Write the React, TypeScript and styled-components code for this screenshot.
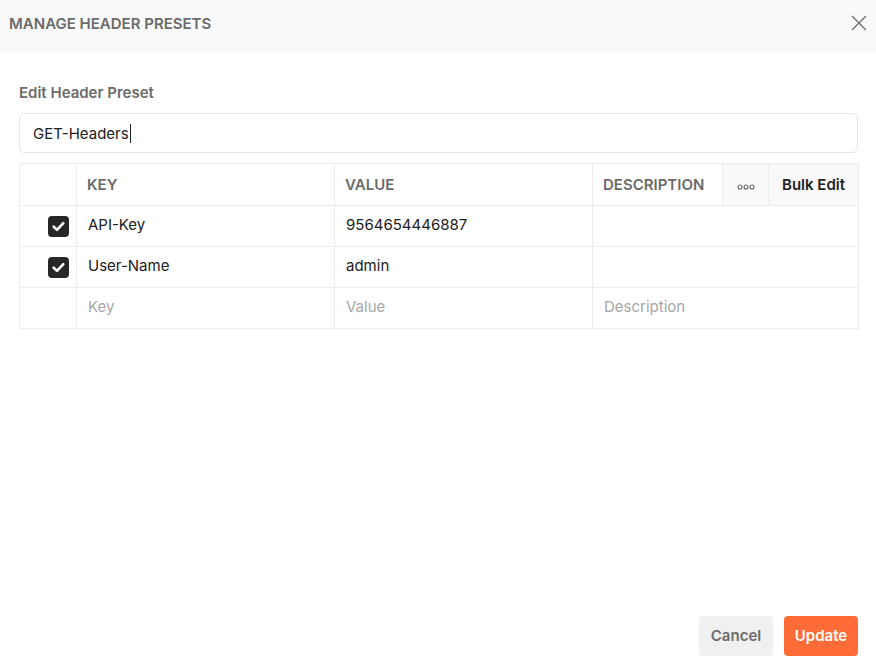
import styled, { createGlobalStyle } from "styled-components";

const GlobalStyle = createGlobalStyle`
  html, body {
    margin: 0;
    padding: 0;
    background: #ffffff;
    font-family: Inter, "Noto Sans", "Liberation Sans", sans-serif;
  }
  * { box-sizing: border-box; }
`;

const Modal = styled.div`
  width: 876px;
  height: 672px;
  display: flex;
  flex-direction: column;
  background: #ffffff;
`;

const Header = styled.div`
  height: 52px;
  flex-shrink: 0;
  display: flex;
  align-items: center;
  justify-content: space-between;
  padding: 0 8px 6px 9px;
  background: #f9f9f9;
`;

const Title = styled.div`
  font-size: 15px;
  font-weight: 600;
  color: #6b6b6b;
`;

const CloseButton = styled.button`
  width: 18px;
  height: 18px;
  padding: 0;
  border: none;
  background: transparent;
  display: flex;
  align-items: center;
  justify-content: center;
  color: #6b6b6b;
  cursor: pointer;
`;

const Body = styled.div`
  flex: 1;
  padding: 31px 18px 0 19px;
`;

const Label = styled.div`
  font-size: 15px;
  font-weight: 600;
  line-height: 20px;
  color: #6b6b6b;
`;

const NameInput = styled.div`
  margin-top: 10px;
  height: 40px;
  border: 1px solid #e6e6e6;
  border-radius: 5px;
  display: flex;
  align-items: center;
  padding-left: 13px;
  font-size: 15px;
  color: #212121;
`;

const Caret = styled.span`
  display: inline-block;
  width: 1px;
  height: 19px;
  background: #212121;
  margin-left: 1px;
`;

const Table = styled.table`
  margin-top: 10px;
  width: 100%;
  border-collapse: collapse;
  table-layout: fixed;
  font-size: 15px;
`;

const HeadCell = styled.th<{ $shaded?: boolean; $dark?: boolean }>`
  height: 42px;
  padding: 0 10px;
  text-align: ${(p) => (p.$dark ? "center" : "left")};
  font-weight: 600;
  color: ${(p) => (p.$dark ? "#212121" : "#6b6b6b")};
  background: ${(p) => (p.$shaded ? "#f9f9f9" : "#ffffff")};
  border: 1px solid #ededed;
  white-space: nowrap;
`;

const MoreCell = styled(HeadCell)`
  text-align: center;
  padding: 0;
`;

const Cell = styled.td<{ $placeholder?: boolean }>`
  height: 41px;
  padding: 0 11px 4px;
  color: ${(p) => (p.$placeholder ? "#a6a6a6" : "#212121")};
  border: 1px solid #ededed;
`;

const CheckCell = styled.td`
  height: 41px;
  padding: 0 0 0 28px;
  border: 1px solid #ededed;
`;

const CheckBox = styled.span`
  width: 21px;
  height: 21px;
  border-radius: 4px;
  background: #262626;
  display: flex;
  align-items: center;
  justify-content: center;
`;

const Footer = styled.div`
  display: flex;
  justify-content: flex-end;
  gap: 11px;
  padding: 0 18px 16px;
`;

const Button = styled.button<{ $primary?: boolean }>`
  width: 74px;
  height: 40px;
  padding-bottom: 2px;
  border: none;
  border-radius: 4px;
  font-family: inherit;
  font-size: 15px;
  font-weight: 600;
  background: ${(p) => (p.$primary ? "#ff6c37" : "#f0f0f0")};
  color: ${(p) => (p.$primary ? "#ffffff" : "#6b6b6b")};
  cursor: pointer;
`;

const rows = [
  { key: "API-Key", value: "9564654446887" },
  { key: "User-Name", value: "admin" },
];

function Check() {
  return (
    <CheckBox>
      <svg width="15" height="15" viewBox="0 0 14 14" fill="none">
        <path d="M2.5 7.2L5.6 10.2L11.5 3.8" stroke="#ffffff" strokeWidth="2.4" strokeLinecap="round" strokeLinejoin="round" />
      </svg>
    </CheckBox>
  );
}

export default function App() {
  return (
    <>
      <GlobalStyle />
      <Modal>
        <Header>
          <Title>MANAGE HEADER PRESETS</Title>
          <CloseButton aria-label="Close">
            <svg width="16" height="16" viewBox="0 0 16 16">
              <path d="M1.5 1.5L14.5 14.5M14.5 1.5L1.5 14.5" stroke="#6b6b6b" strokeWidth="1.3" strokeLinecap="round" />
            </svg>
          </CloseButton>
        </Header>
        <Body>
          <Label>Edit Header Preset</Label>
          <NameInput>
            GET-Headers
            <Caret />
          </NameInput>
          <Table>
            <colgroup>
              <col style={{ width: 57 }} />
              <col style={{ width: 258 }} />
              <col style={{ width: 258 }} />
              <col style={{ width: 130 }} />
              <col style={{ width: 46 }} />
              <col style={{ width: 90 }} />
            </colgroup>
            <thead>
              <tr>
                <HeadCell />
                <HeadCell>KEY</HeadCell>
                <HeadCell>VALUE</HeadCell>
                <HeadCell>DESCRIPTION</HeadCell>
                <MoreCell $shaded>
                  <svg width="18" height="6" viewBox="0 0 18 6">
                    <circle cx="3" cy="3" r="2" stroke="#6b6b6b" strokeWidth="1.1" fill="none" />
                    <circle cx="9" cy="3" r="2" stroke="#6b6b6b" strokeWidth="1.1" fill="none" />
                    <circle cx="15" cy="3" r="2" stroke="#6b6b6b" strokeWidth="1.1" fill="none" />
                  </svg>
                </MoreCell>
                <HeadCell $shaded $dark>Bulk Edit</HeadCell>
              </tr>
            </thead>
            <tbody>
              {rows.map((r) => (
                <tr key={r.key}>
                  <CheckCell>
                    <Check />
                  </CheckCell>
                  <Cell>{r.key}</Cell>
                  <Cell>{r.value}</Cell>
                  <Cell colSpan={3} />
                </tr>
              ))}
              <tr>
                <CheckCell />
                <Cell $placeholder>Key</Cell>
                <Cell $placeholder>Value</Cell>
                <Cell $placeholder colSpan={3}>Description</Cell>
              </tr>
            </tbody>
          </Table>
        </Body>
        <Footer>
          <Button>Cancel</Button>
          <Button $primary>Update</Button>
        </Footer>
      </Modal>
    </>
  );
}
